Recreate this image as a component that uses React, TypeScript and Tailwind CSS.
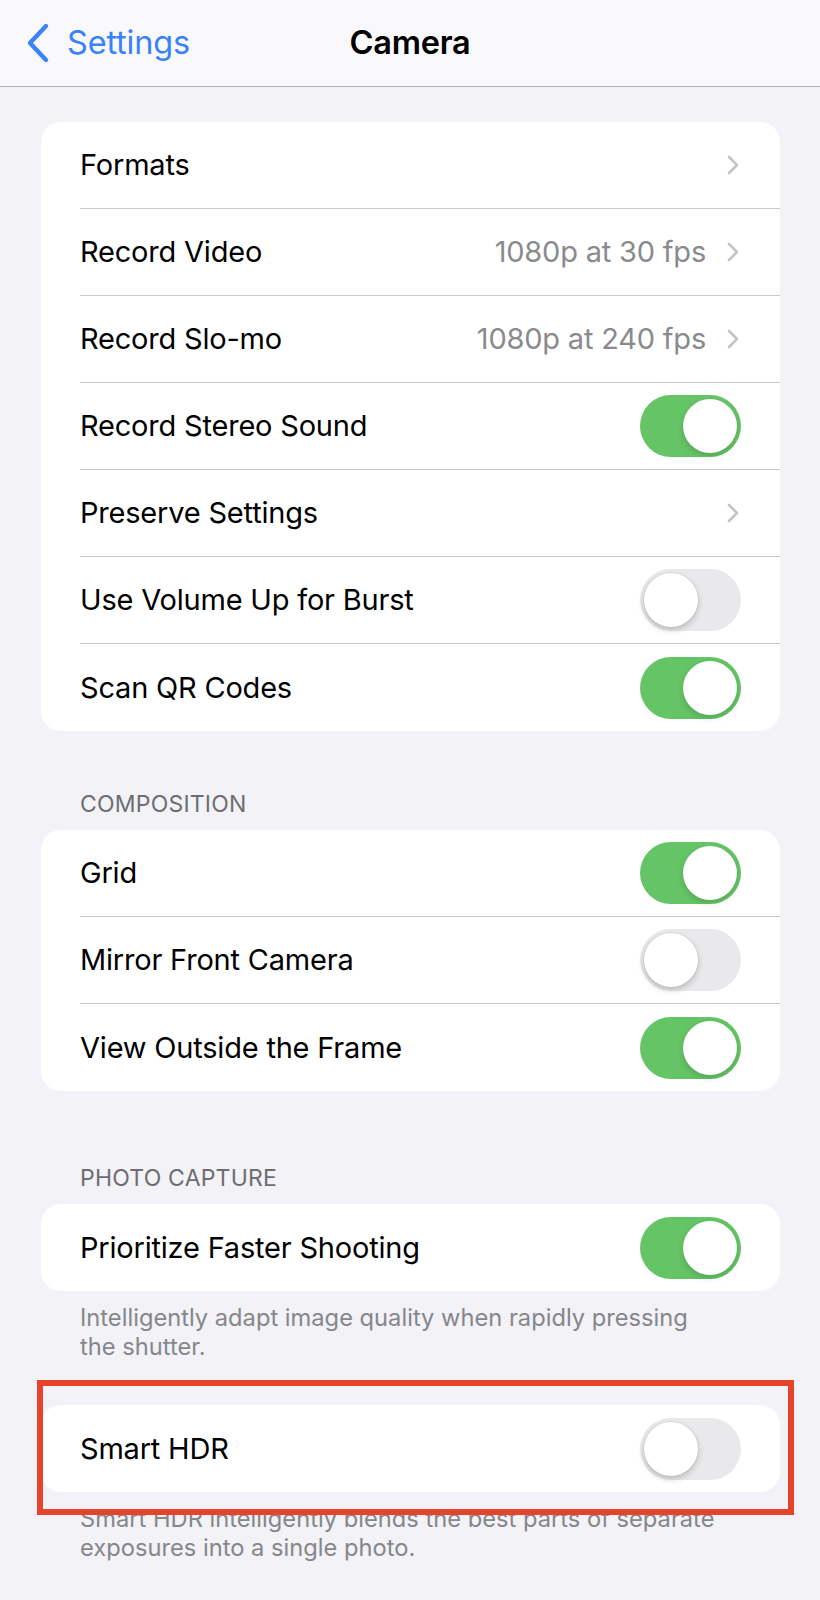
import React from 'react';

type Row = {
  label: string;
  value?: string;
  chevron?: boolean;
  toggle?: boolean;
  on?: boolean;
};

const Chevron: React.FC = () => (
  <svg width="14" height="20" viewBox="0 0 14 20" className="shrink-0">
    <polyline points="3,2 11,10 3,18" fill="none" stroke="#c4c4c7" strokeWidth="2.6" strokeLinecap="round" strokeLinejoin="round" />
  </svg>
);

const Toggle: React.FC<{ on?: boolean }> = ({ on }) => (
  <div
    className={
      on
        ? 'relative w-[101px] h-[62px] rounded-full bg-[#65c466] shrink-0'
        : 'relative w-[101px] h-[62px] rounded-full bg-[#e9e9eb] shrink-0'
    }
  >
    <div
      className={
        on
          ? 'absolute top-[4px] right-[4px] w-[54px] h-[54px] rounded-full bg-white shadow-[0_3px_6px_rgba(0,0,0,0.15)]'
          : 'absolute top-[4px] left-[4px] w-[54px] h-[54px] rounded-full bg-white shadow-[0_3px_6px_rgba(0,0,0,0.2),0_0_0_1px_rgba(0,0,0,0.04)]'
      }
    />
  </div>
);

const SettingsRow: React.FC<{ row: Row; last: boolean }> = ({ row, last }) => (
  <div className="flex h-[87px] pl-[39px]">
    <div
      className={
        last
          ? 'flex flex-1 items-center justify-between pr-[39px]'
          : 'flex flex-1 items-center justify-between pr-[39px] border-b border-[#c8c7cc]'
      }
    >
      <span className="text-[29px] text-black tracking-[-0.2px]">{row.label}</span>
      {row.toggle ? (
        <Toggle on={row.on} />
      ) : (
        <div className="flex items-center gap-[20px] pr-[1px]">
          {row.value && <span className="text-[29px] text-[#8a8a8e] tracking-[-0.2px]">{row.value}</span>}
          <Chevron />
        </div>
      )}
    </div>
  </div>
);

const Card: React.FC<{ rows: Row[] }> = ({ rows }) => (
  <div className="mx-[41px] mr-[40px] bg-white rounded-[20px] overflow-hidden">
    {rows.map((row, i) => (
      <SettingsRow key={row.label} row={row} last={i === rows.length - 1} />
    ))}
  </div>
);

const SectionHeader: React.FC<{ title: string; top: string }> = ({ title, top }) => (
  <div className={`${top} mb-[12px] px-[80px] h-[28px] leading-[28px] text-[23px] text-[#6d6d72] tracking-[0.2px]`}>
    {title}
  </div>
);

const Footer: React.FC<{ children: React.ReactNode }> = ({ children }) => (
  <p className="mt-[12px] px-[80px] text-[23.7px] leading-[29px] text-[#86868b]">{children}</p>
);

export default function App() {
  const general: Row[] = [
    { label: 'Formats', chevron: true },
    { label: 'Record Video', value: '1080p at 30 fps', chevron: true },
    { label: 'Record Slo-mo', value: '1080p at 240 fps', chevron: true },
    { label: 'Record Stereo Sound', toggle: true, on: true },
    { label: 'Preserve Settings', chevron: true },
    { label: 'Use Volume Up for Burst', toggle: true, on: false },
    { label: 'Scan QR Codes', toggle: true, on: true },
  ];

  const composition: Row[] = [
    { label: 'Grid', toggle: true, on: true },
    { label: 'Mirror Front Camera', toggle: true, on: false },
    { label: 'View Outside the Frame', toggle: true, on: true },
  ];

  return (
    <div className="min-h-[1600px] bg-[#f2f2f7] font-['Inter','Noto_Sans',sans-serif]">
      <header className="relative h-[87px] bg-[#f9f9fb] border-b border-[#b4b4b8] flex items-center">
        <div className="flex items-center pl-[25px] gap-[16px]">
          <svg width="26" height="42" viewBox="0 0 26 42">
            <polyline points="21,4 5,21 21,38" fill="none" stroke="#3a82f7" strokeWidth="4.4" strokeLinecap="round" strokeLinejoin="round" />
          </svg>
          <span className="text-[32.5px] text-[#3a82f7] tracking-[-0.2px]">Settings</span>
        </div>
        <h1 className="absolute left-0 right-0 text-center text-[32.5px] font-semibold text-black tracking-[-0.2px] pointer-events-none">
          Camera
        </h1>
      </header>

      <div className="pt-[35px]">
        <Card rows={general} />

        <SectionHeader title="COMPOSITION" top="mt-[59px]" />
        <Card rows={composition} />

        <SectionHeader title="PHOTO CAPTURE" top="mt-[73px]" />
        <Card rows={[{ label: 'Prioritize Faster Shooting', toggle: true, on: true }]} />
        <Footer>
          Intelligently adapt image quality when rapidly pressing
          <br />
          the shutter.
        </Footer>

        <div className="relative mt-[44px]">
          <Card rows={[{ label: 'Smart HDR', toggle: true, on: false }]} />
          <div className="absolute z-10 left-[37px] w-[757px] -top-[25px] -bottom-[23px] border-[6px] border-[#e5442b] pointer-events-none" />
        </div>
        <Footer>
          Smart HDR intelligently blends the best parts of separate
          <br />
          exposures into a single photo.
        </Footer>
      </div>
    </div>
  );
}
